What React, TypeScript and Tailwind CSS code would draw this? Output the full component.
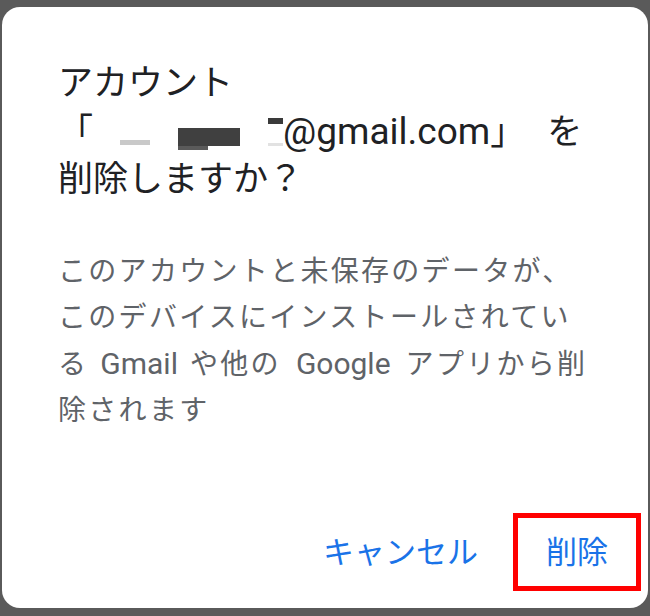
const jp = { fontFamily: '"Roboto", "Noto Sans CJK JP", sans-serif' };

function Redacted() {
  // blurred-out part of the address, drawn as marks
  return (
    <svg width="190" height="47" viewBox="0 0 190 47" className="inline-block align-top">
      <rect x="27" y="32" width="30" height="5" fill="#c9c9c9" />
      <rect x="85" y="20" width="62" height="18" fill="#404040" />
      <rect x="85" y="38" width="30" height="4" fill="#5a5a5a" />
      <rect x="175" y="10" width="16" height="6" fill="#3a3a3a" />
      <rect x="175" y="35" width="16" height="3" fill="#e2e2e2" />
    </svg>
  );
}

export default function App() {
  return (
    <div className="h-[616px] w-[650px] bg-[#5a5a5a] px-[2px] pt-[7px] pb-[8px]" style={jp}>
      <div className="flex h-full flex-col rounded-[18px] bg-white">
        <h1 className="pl-[56px] pt-[53px] text-[35px] leading-[47.5px] font-normal text-[#202124]">
          <span className="block">アカウント</span>
          <span className="block whitespace-nowrap">
            「<Redacted />
            <span className="text-[37px]">@gmail.com</span>」<span className="ml-[22px]">を</span>
          </span>
          <span className="block">削除しますか？</span>
        </h1>

        <p className="mt-[45px] pl-[56px] text-[28px] leading-[46px] tracking-[2.3px] text-[#5f6368]">
          <span className="block">このアカウントと未保存のデータが、</span>
          <span className="block">このデバイスにインストールされてい</span>
          <span className="block whitespace-nowrap">
            る<span className="mx-[12px] text-[30px] tracking-normal">Gmail</span>や他の
            <span className="mx-[15px] text-[30px] tracking-normal">Google</span>アプリから削
          </span>
          <span className="block">除されます</span>
        </p>

        <div className="mt-auto flex items-center justify-end pr-[7px] pb-[17px]">
          <button className="mr-[35px] text-[31px] leading-none text-[#1a73e8]">キャンセル</button>
          <div className="flex h-[78px] w-[128px] items-center justify-center border-[5px] border-[#ff0000]">
            <button className="text-[31px] leading-none text-[#1a73e8]">削除</button>
          </div>
        </div>
      </div>
    </div>
  );
}
